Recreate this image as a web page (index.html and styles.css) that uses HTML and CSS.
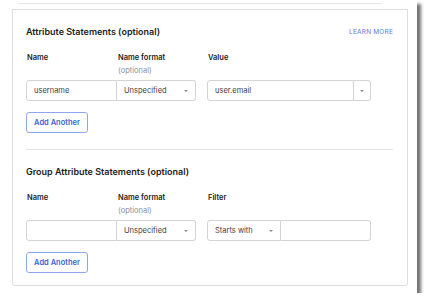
FILE: index.html
```html
<!DOCTYPE html>
<html lang="en">
<head>
  <meta charset="UTF-8" />
  <title>SAML Attribute Statements</title>
  <link rel="stylesheet" href="styles.css">
</head>
<body>
  <div class="sheet">
    <div class="prev-rule"></div>
    <div class="card">
      <section class="block">
        <div class="block-head">
          <h3>Attribute Statements (optional)</h3>
          <a class="learn" href="#">LEARN MORE</a>
        </div>
        <div class="row labels">
          <div class="lbl">Name</div>
          <div class="lbl">Name format<span class="opt">(optional)</span></div>
          <div class="lbl col3">Value</div>
        </div>
        <div class="row fields">
          <div class="box text joined-left">username</div>
          <div class="box select joined-right">Unspecified<span class="caret"></span></div>
          <div class="combo col3">
            <div class="box text combo-text">user.email</div>
            <div class="box combo-btn"><span class="caret"></span></div>
          </div>
        </div>
        <button class="add-btn" type="button">Add Another</button>
      </section>
      <hr class="divider">
      <section class="block">
        <div class="block-head">
          <h3>Group Attribute Statements (optional)</h3>
        </div>
        <div class="row labels">
          <div class="lbl">Name</div>
          <div class="lbl">Name format<span class="opt">(optional)</span></div>
          <div class="lbl col3">Filter</div>
        </div>
        <div class="row fields">
          <div class="box text joined-left"></div>
          <div class="box select joined-right">Unspecified<span class="caret"></span></div>
          <div class="combo col3">
            <div class="box select filter-sel">Starts with<span class="caret"></span></div>
            <div class="box text filter-text"></div>
          </div>
        </div>
        <button class="add-btn" type="button">Add Another</button>
      </section>
    </div>
  </div>
</body>
</html>
```

FILE: styles.css
```css
html, body {
  margin: 0;
  padding: 0;
  background: #fff;
  font-family: Inter, "Open Sans", sans-serif;
  color: #1d1d21;
}
.sheet {
  width: 417px;
  height: 293px;
  box-sizing: border-box;
  padding-top: 3px;
  background: #fff;
  box-shadow: 4px 4px 3px rgba(0, 0, 0, 0.55);
}
.prev-rule {
  height: 1px;
  margin: 0 35px 0 18px;
  background: #e6e6e6;
}
.card {
  margin: 5px 0 0 12px;
  width: 396px;
  height: 277px;
  box-sizing: border-box;
  border: 1px solid #dcdcdc;
  border-radius: 0 0 3px 3px;
  padding: 0 14px 0 13px;
}
.block-head {
  display: flex;
  justify-content: space-between;
  align-items: center;
  padding-top: 15px;
  height: 14px;
}
.block-head h3 {
  margin: 0;
  font-size: 9px;
  font-weight: 600;
  line-height: 14px;
}
.learn {
  font-size: 6.5px;
  color: #5a7ae0;
  text-decoration: none;
  letter-spacing: 0.2px;
}
.row {
  display: grid;
  grid-template-columns: 91px 79px 175px;
}
.col3 {
  margin-left: 11px;
}
.labels {
  margin-top: 13px;
}
.lbl {
  font-size: 7.5px;
  font-weight: 600;
  line-height: 12px;
  padding-left: 1px;
}
.opt {
  display: block;
  margin-top: 1px;
  font-weight: 400;
  color: #8c8c96;
}
.fields {
  margin-top: 3px;
  height: 21px;
}
.box {
  box-sizing: border-box;
  height: 21px;
  border: 1px solid #d4d4d8;
  font-size: 7.5px;
  line-height: 19px;
  color: #3c3c44;
  padding-left: 7px;
  position: relative;
}
.joined-left {
  border-radius: 3px 0 0 3px;
}
.joined-right {
  border-left: none;
  border-radius: 0 3px 3px 0;
}
.caret {
  position: absolute;
  right: 7px;
  top: 9px;
  width: 0;
  height: 0;
  border-left: 2px solid transparent;
  border-right: 2px solid transparent;
  border-top: 2px solid #8a8a92;
}
.combo {
  display: flex;
}
.combo-text {
  flex: 1;
  border-radius: 3px 0 0 3px;
}
.combo-btn {
  width: 17px;
  padding: 0;
  border-left: none;
  border-radius: 0 3px 3px 0;
}
.combo-btn .caret {
  right: 6px;
}
.filter-sel {
  width: 74px;
  border-radius: 3px 0 0 3px;
}
.filter-text {
  flex: 1;
  border-left: none;
  border-radius: 0 3px 3px 0;
}
.add-btn {
  display: block;
  margin-top: 11px;
  height: 21px;
  width: 62px;
  padding: 0;
  border: 1px solid #8ea6ee;
  border-radius: 3px;
  background: #fff;
  color: #3d5fd6;
  font-family: Inter, "Open Sans", sans-serif;
  font-size: 7.5px;
  font-weight: 600;
}
.divider {
  margin: 16px 0 0 0;
  border: none;
  height: 1px;
  background: #e2e2e2;
}
```
